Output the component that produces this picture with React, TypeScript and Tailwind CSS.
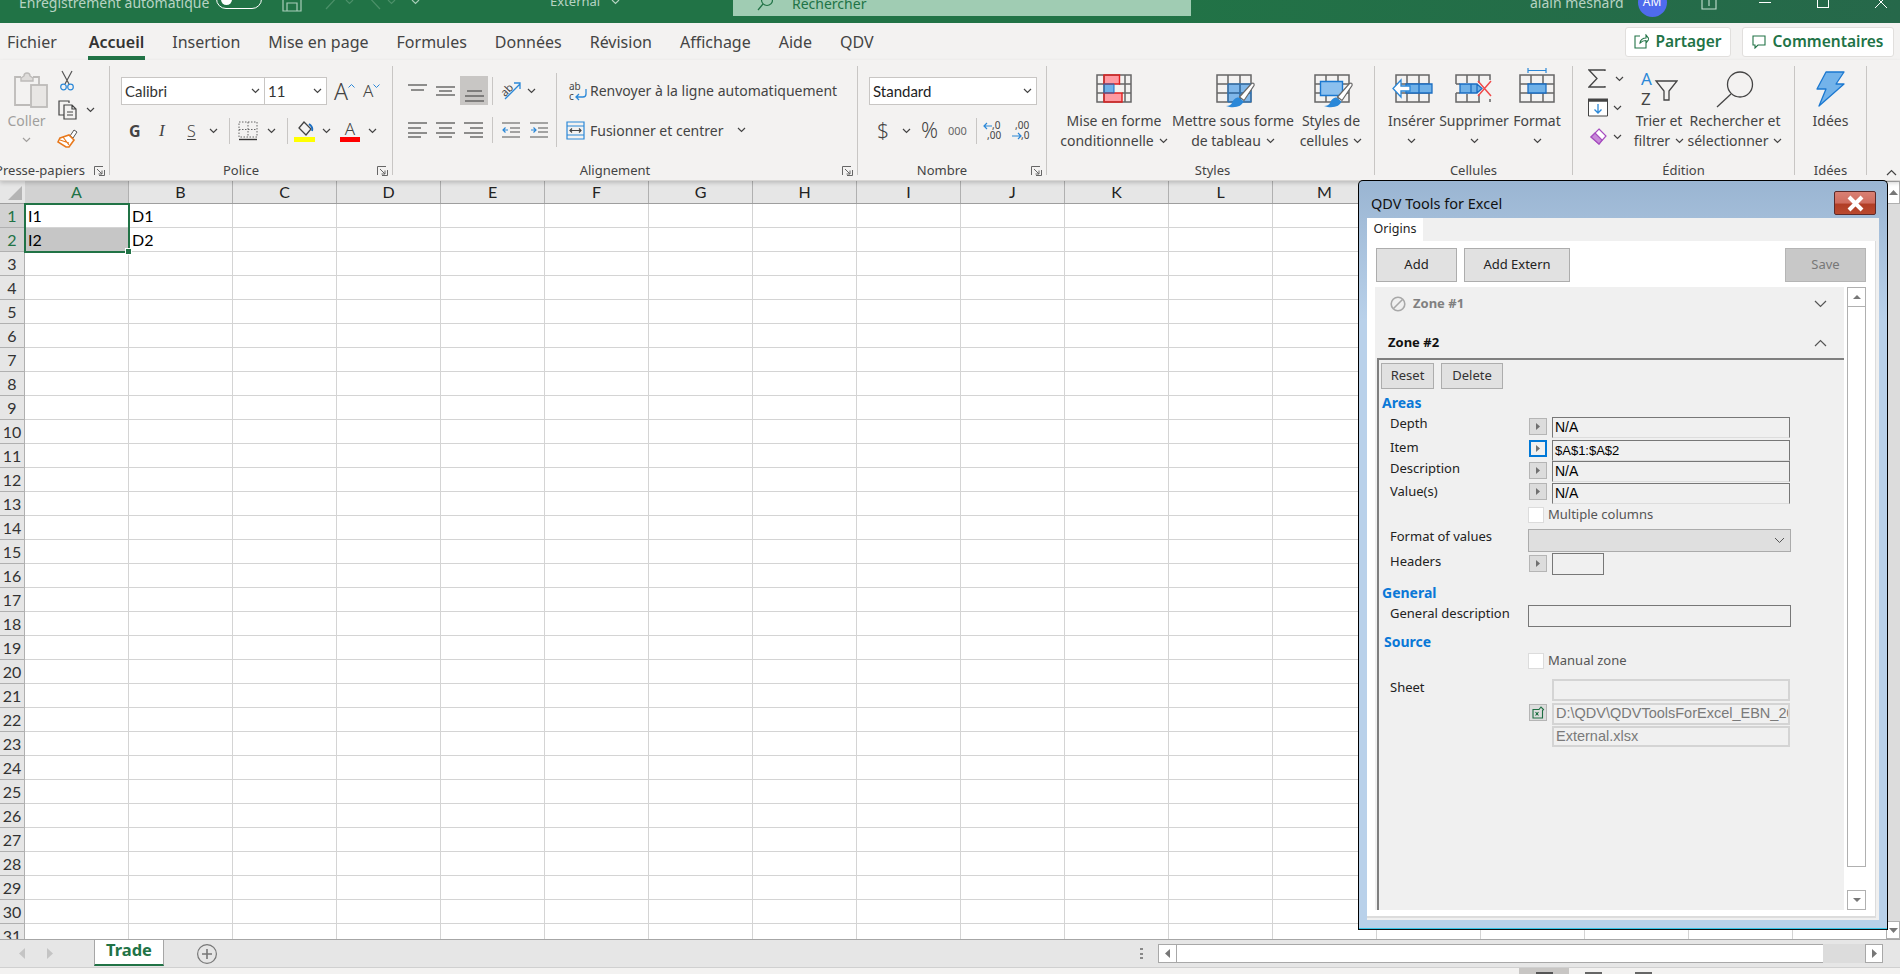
import { ReactNode } from "react";

const cols = ["A", "B", "C", "D", "E", "F", "G", "H", "I", "J", "K", "L", "M", "N", "O", "P", "Q", "R"];
const rows = Array.from({ length: 31 }, (_, i) => i + 1);
const cells: Record<string, string> = { A1: "I1", B1: "D1", A2: "I2", B2: "D2" };
const tabs = ["Fichier", "Accueil", "Insertion", "Mise en page", "Formules", "Données", "Révision", "Affichage", "Aide", "QDV"];

const Chev = ({ className = "", color = "#444" }: { className?: string; color?: string }) => (
  <svg width="9" height="6" viewBox="0 0 9 6" fill="none" stroke={color} strokeWidth="1.2" className={"shrink-0 " + className}>
    <path d="M1 1l3.5 3.5L8 1" />
  </svg>
);

const Launcher = () => (
  <svg width="11" height="10" viewBox="0 0 11 10" fill="none" stroke="#666" strokeWidth="1" className="shrink-0">
    <path d="M.5 9V.5H9M3 3l5 5M8 4.500V8H4.500M10.500 4v5.500H5" />
  </svg>
);

const Sep = ({ className }: { className: string }) => <div className={"w-px shrink-0 bg-[#c8c6c4] " + className} />;

// ribbon group with its caption row
const Group = ({ width, label, launcher, labelClass = "", children }: { width: string; label: string; launcher?: boolean; labelClass?: string; children: ReactNode }) => (
  <div className={"flex h-[109px] shrink-0 flex-col border-r border-[#c8c6c4] " + width}>
    <div className="h-[99px] shrink-0">{children}</div>
    <div className="flex h-[11px] items-center">
      <div className={"flex-1 whitespace-nowrap text-center text-[13px] leading-[13px] text-[#444] " + labelClass}>{label}</div>
      {launcher && (
        <div className="flex w-[20px] justify-center">
          <Launcher />
        </div>
      )}
    </div>
  </div>
);

const Lines = ({ lines, width = 19, height = 16 }: { lines: number[][]; width?: number; height?: number }) => (
  <svg width={width} height={height} viewBox={`0 0 ${width} ${height}`} stroke="#555" strokeWidth="1.3" className="shrink-0">
    {lines.map((l, i) => (
      <path key={i} d={`M${l[1]} ${l[0]}H${l[2]}`} />
    ))}
  </svg>
);

// large ribbon button: icon on top, one or two caption lines under it
const Large = ({ width, icon, lines, chevInline, chevBelow, iconClass = "" }: { width: string; icon: ReactNode; lines: string[]; chevInline?: boolean; chevBelow?: boolean; iconClass?: string }) => (
  <div className={"flex shrink-0 flex-col items-center " + width}>
    <div className={"flex h-[45px] w-full items-start justify-center " + iconClass}>{icon}</div>
    {lines.map((l, i) => (
      <div key={i} className="flex h-[20px] items-center gap-[5px] whitespace-nowrap text-[14px] leading-[20px] text-[#444]">
        {l}
        {chevInline && i === lines.length - 1 && <Chev />}
      </div>
    ))}
    {chevBelow && (
      <div className="flex h-[20px] items-center">
        <Chev />
      </div>
    )}
  </div>
);

const GridIcon = ({ children, w = 36, h = 29 }: { children?: ReactNode; w?: number; h?: number }) => (
  <svg width={w} height={h} viewBox={`0 0 ${w} ${h}`} fill="none" className="shrink-0 overflow-visible">
    {children}
  </svg>
);

const gridLines = "M1 1h34v27H1zM1 10h34M1 19h34M12 1v27M24 1v27";
const gridStroke = { stroke: "#666", strokeWidth: 1.5 };

const Brush = () => (
  <g>
    <path d="M35.500 9.500c2-1 3 0 2.500 2L28 26.500l-4.500-3.500z" fill="#fff" stroke="#666" strokeWidth="1.200" />
    <path d="M22.500 23.500l5 4c-1.500 4-6 6.500-14 5.500-1-.2-2-.5-3.500-1 3 0 5-1 6-3 1-3 3-5.500 6.500-5.500z" fill="#2b88d8" />
  </g>
);

const Picker = ({ className = "", active }: { className?: string; active?: boolean }) => (
  <div className={"mr-[5px] flex h-[17px] w-[18px] shrink-0 items-center justify-center " + (active ? "border-2 border-[#0078d7] " : "border border-[#b5b5b5] bg-[#dcdcdc] ") + className}>
    <svg width="4" height="7" viewBox="0 0 4 7" fill="#707070"><path d="M0 0l4 3.500L0 7z" /></svg>
  </div>
);

const Field = ({ value, className = "", size = "text-[14px]", light, gray }: { value?: string; className?: string; size?: string; light?: boolean; gray?: boolean }) => (
  <div className={"flex w-[238px] shrink-0 items-center overflow-hidden whitespace-nowrap pl-[2px] font-['Liberation_Sans',sans-serif] " + size + " " + (light ? "border-2 border-[#d4d4d4] " : "border border-[#777] border-b-[#ddd] ") + (gray ? "text-[#7a7a7a] " : "text-black ") + className}>
    {value}
  </div>
);

const FieldRow = ({ label, rowClass, labelClass = "", children }: { label?: string; rowClass: string; labelClass?: string; children?: ReactNode }) => (
  <div className={"flex items-start pl-[11px] " + rowClass}>
    <div className={"w-[139px] shrink-0 whitespace-nowrap text-[13px] leading-[16px] text-[#222] " + labelClass}>{label}</div>
    {children}
  </div>
);

const Check = ({ label }: { label: string }) => (
  <>
    <div className="-ml-px h-[16px] w-[16px] shrink-0 border border-[#dcdcdc] bg-white" />
    <div className="-mt-px ml-[4px] whitespace-nowrap text-[13px] leading-[16px] text-[#555]">{label}</div>
  </>
);

const Heading = ({ children, className }: { children: string; className: string }) => (
  <div className={"h-[18px] text-[14px] font-bold leading-[18px] text-[#0a78d7] " + className}>{children}</div>
);

const QdvDialog = () => (
  <div className="absolute left-[1358px] top-[180px] z-20 flex h-[750px] w-[530px] flex-col rounded-t-[5px] border border-black border-b-[#111] bg-[linear-gradient(#9ab5d2_0,#b9d1ea_140px)] px-[8px] pb-[9px] font-['Noto_Sans',sans-serif] shadow-[inset_0_-1px_0_#35c4e8]">
    <div className="flex h-[37px] shrink-0 items-start">
      <div className="ml-[4px] mt-[12px] whitespace-nowrap text-[14.500px] leading-[20px] text-[#111]">QDV Tools for Excel</div>
      <div className="ml-auto mr-[3px] mt-[10px] flex h-[24px] w-[42px] items-center justify-center rounded-[2px] border border-[#5d2a2a] bg-[linear-gradient(#d98074_0,#cf6c5e_50%,#b13d25_55%,#b9492f_100%)]">
        <svg width="19" height="17" viewBox="0 0 19 17" fill="none" stroke="#fff" strokeWidth="4"><path d="M3 2l13 13M16 2L3 15" /></svg>
      </div>
    </div>
    <div className="flex flex-1 flex-col bg-[#f0f0f0]">
      <div className="flex h-[23px] shrink-0">
        <div className="flex w-[56px] items-center justify-center bg-white text-[12.500px] text-[#222]">Origins</div>
      </div>
      <div className="mb-[2px] mr-[3px] flex flex-1 flex-col border-b-2 border-r border-[#dcdcdc] bg-white pl-[9px] pr-[9px] pt-[7px]">
        <div className="flex h-[34px] shrink-0 text-[13px] text-[#222]">
          <div className="flex w-[81px] items-center justify-center border border-[#adadad] bg-[#e1e1e1]">Add</div>
          <div className="ml-[7px] flex w-[106px] items-center justify-center border border-[#adadad] bg-[#e1e1e1]">Add Extern</div>
          <div className="ml-auto flex w-[81px] items-center justify-center border border-[#b5b5b5] bg-[#c8c8c8] text-[#777]">Save</div>
        </div>
        <div className="-ml-px mb-[6px] mt-[5px] flex flex-1">
          <div className="flex w-[469px] shrink-0 flex-col bg-[#f0f0f0]">
            <div className="flex h-[32px] shrink-0 items-center pl-[15px] pr-[17px] pt-[1px]">
              <svg width="16" height="16" viewBox="0 0 16 16" fill="none" stroke="#a8a8a8" strokeWidth="1.600"><circle cx="8" cy="8" r="6.800" /><path d="M3.500 12.500l9-9" /></svg>
              <div className="ml-[7px] text-[13px] font-bold text-[#808080]">Zone #1</div>
              <svg className="ml-auto" width="13" height="8" viewBox="0 0 13 8" fill="none" stroke="#555" strokeWidth="1.200"><path d="M1 1l5.500 5.500L12 1" /></svg>
            </div>
            <div className="flex h-[39px] shrink-0 items-center pl-[13px] pr-[17px] pt-[9px]">
              <div className="text-[13px] font-bold text-[#111]">Zone #2</div>
              <svg className="ml-auto" width="13" height="8" viewBox="0 0 13 8" fill="none" stroke="#555" strokeWidth="1.200"><path d="M1 7l5.500-5.500L12 7" /></svg>
            </div>
            <div className="ml-[2px] flex-1 border-l-2 border-t-2 border-[#7f7f7f]">
              <div className="mt-[3px] flex h-[26px] gap-[7px] pl-[2px] text-[13px] text-[#333]">
                <div className="flex w-[53px] items-center justify-center border border-[#adadad] bg-[#e1e1e1]">Reset</div>
                <div className="flex w-[62px] items-center justify-center border border-[#adadad] bg-[#e1e1e1]">Delete</div>
              </div>
              <Heading className="ml-[3px] mt-[5px]">Areas</Heading>
              <FieldRow label="Depth" rowClass="mt-[5px] h-[23px]" labelClass="-mt-[2px]">
                <Picker className="mt-px" />
                <Field value="N/A" className="h-[21px]" />
              </FieldRow>
              <FieldRow label="Item" rowClass="h-[21px]" labelClass="-mt-px">
                <Picker active />
                <Field value="$A$1:$A$2" size="text-[13px]" className="h-[21px]" />
              </FieldRow>
              <FieldRow label="Description" rowClass="h-[22px]" labelClass="-mt-[1px]">
                <Picker className="mt-px" />
                <Field value="N/A" className="h-[21px]" />
              </FieldRow>
              <FieldRow label="Value(s)" rowClass="h-[21px]">
                <Picker />
                <Field value="N/A" className="h-[21px]" />
              </FieldRow>
              <FieldRow rowClass="mt-[3px] h-[16px]">
                <Check label="Multiple columns" />
              </FieldRow>
              <FieldRow label="Format of values" rowClass="mt-[6px] h-[23px]" labelClass="-mt-px">
                <div className="-ml-px flex h-[23px] w-[263px] shrink-0 items-center justify-end border border-[#ababab] bg-[#dfdfdf] pr-[5px]">
                  <svg width="11" height="7" viewBox="0 0 11 7" fill="none" stroke="#555" strokeWidth="1"><path d="M1 1l4.500 4.500L10 1" /></svg>
                </div>
              </FieldRow>
              <FieldRow label="Headers" rowClass="mt-px h-[22px]">
                <Picker className="mt-[2px]" />
                <div className="h-[22px] w-[52px] shrink-0 border border-[#777]" />
              </FieldRow>
              <Heading className="ml-[3px] mt-[9px]">General</Heading>
              <FieldRow label="General description" rowClass="mt-[3px] h-[22px]">
                <div className="-ml-px h-[22px] w-[263px] shrink-0 border border-[#777]" />
              </FieldRow>
              <Heading className="ml-[5px] mt-[6px]">Source</Heading>
              <FieldRow rowClass="mt-[2px] h-[16px]">
                <Check label="Manual zone" />
              </FieldRow>
              <FieldRow label="Sheet" rowClass="mt-[10px] h-[24px]">
                <div className="w-[23px] shrink-0" />
                <Field light className="h-[22px]" />
              </FieldRow>
              <FieldRow rowClass="h-[23px]">
                <div className="mr-[5px] mt-px flex h-[17px] w-[18px] shrink-0 items-center justify-center border border-[#b5b5b5] bg-[#dcdcdc]">
                  <svg width="13" height="13" viewBox="0 0 13 13" fill="none" stroke="#1d6f42" strokeWidth="1.100"><path d="M1 3.500h6l2-2.500 2.500 2.500-1 1V12H1zM3.500 6l3 3.500M6.500 6l-3 3.500" /></svg>
                </div>
                <Field light gray value="D:\QDV\QDVToolsForExcel_EBN_2020" size="text-[14.500px]" className="h-[22px]" />
              </FieldRow>
              <FieldRow rowClass="h-[22px]">
                <div className="w-[23px] shrink-0" />
                <Field light gray value="External.xlsx" size="text-[14.500px]" className="h-[21px]" />
              </FieldRow>
            </div>
          </div>
          <div className="ml-[3px] flex w-[19px] flex-col">
            <div className="flex h-[20px] shrink-0 items-center justify-center border border-[#b0b0b0] bg-white">
              <svg width="8" height="4" viewBox="0 0 8 4" fill="#777"><path d="M4 0l4 4H0z" /></svg>
            </div>
            <div className="h-[560px] border border-t-0 border-[#b0b0b0] bg-white" />
            <div className="mt-auto flex h-[20px] shrink-0 items-center justify-center border border-[#b0b0b0] bg-white">
              <svg width="8" height="4" viewBox="0 0 8 4" fill="#777"><path d="M4 4l4-4H0z" /></svg>
            </div>
          </div>
        </div>
      </div>
    </div>
  </div>
);

const SheetGrid = () => (
  <div className="relative min-w-0 flex-1 overflow-hidden font-['Lato',sans-serif]">
    <div className="flex h-[23px] border-b border-[#9e9e9e]">
      <div className="flex w-[25px] shrink-0 items-end justify-end bg-[#e6e6e6] p-[3px]">
        <div className="h-0 w-0 border-b-[14px] border-l-[14px] border-b-[#b4b4b4] border-l-transparent" />
      </div>
      {cols.map((c) => (
        <div key={c} className={"flex w-[104px] shrink-0 items-center justify-center border-r border-[#b0b0b0] text-[16px] " + (c === "A" ? "bg-[#d2d2d2] text-[#217346]" : "bg-[#e6e6e6] text-[#222]")}>
          {c}
        </div>
      ))}
    </div>
    {rows.map((r) => (
      <div key={r} className="flex h-[24px]">
        <div className={"flex w-[25px] shrink-0 items-center justify-center border-b border-r border-[#b0b0b0] pt-px text-[16px] " + (r < 3 ? "bg-[#d2d2d2] text-[#217346]" : "bg-[#e6e6e6] text-[#333]")}>
          {r}
        </div>
        {cols.map((c) => (
          <div key={c} className={"flex w-[104px] shrink-0 items-center border-b border-r border-[#d4d4d4] pl-[3px] pt-px text-[16px] text-black " + (c + r === "A2" ? "bg-[#c6c6c6]" : "")}>
            {cells[c + r]}
          </div>
        ))}
      </div>
    ))}
    <div className="absolute left-[24px] top-[22px] h-[50px] w-[106px] border-[2px] border-[#217346]">
      <div className="absolute -bottom-[4px] -right-[4px] h-[7px] w-[7px] border border-white bg-[#217346]" />
    </div>
  </div>
);

const Ribbon = () => (
  <div className="relative z-10 flex h-[121px] shrink-0 border-b border-[#d8d6d4] bg-[#f3f2f1] pt-[6px] shadow-[0_2px_4px_rgba(0,0,0,0.18)]">
    <Group width="w-[110px]" label="Presse-papiers" launcher labelClass="-ml-[9px]">
      <div className="flex">
        <div className="flex w-[53px] shrink-0 flex-col items-center pt-[4px]">
          <svg className="ml-[8px]" width="35" height="38" viewBox="0 0 35 38" fill="none" stroke="#bdbbb9" strokeWidth="1.800">
            <path d="M17 35H2V7h6M20 7h6v8" />
            <path d="M8 8l3-2c0-4 6-4 6 0l3 2v3H8z" fill="#dedcda" strokeWidth="1.400" />
            <rect x="18" y="15" width="16" height="22" fill="#e8e6e4" />
          </svg>
          <div className="mt-[3px] text-[14px] leading-[20px] text-[#a19f9d]">Coller</div>
          <Chev color="#a19f9d" className="mt-[6px]" />
        </div>
        <div className="ml-[4px] flex flex-col items-start pt-[4px]">
          <svg className="ml-[3px]" width="14" height="21" viewBox="0 0 14 21" fill="none" strokeWidth="1.200">
            <path d="M2 1l7 13M12 1L5 14" stroke="#555" />
            <circle cx="3.500" cy="17" r="2.800" stroke="#2b88d8" />
            <circle cx="10.500" cy="17" r="2.800" stroke="#2b88d8" />
          </svg>
          <div className="mt-[9px] flex items-center gap-[5px]">
            <svg width="21" height="20" viewBox="0 0 21 20" fill="none" stroke="#444" strokeWidth="1.200">
              <path d="M12 3V1H2v14h5" />
              <path d="M7 5h8l4 4v10H7zM15 5v4h4M10 12h6M10 15h6" />
            </svg>
            <Chev className="ml-[3px]" />
          </div>
          <svg className="mt-[9px]" width="21" height="19" viewBox="0 0 21 19" fill="none">
            <path d="M13 7l4-6 3 2-4 6z" fill="#fff" stroke="#555" />
            <path d="M3 9l9-3 5 5-5 7H9l-8-5z" fill="#fff" stroke="#e8791c" strokeWidth="1.600" />
            <path d="M3 11l9 3M6 8l6 8" stroke="#e8791c" strokeWidth="1.200" />
          </svg>
        </div>
      </div>
    </Group>

    <Group width="w-[283px]" label="Police" launcher>
      <div className="pl-[11px] pt-[11px]">
        <div className="flex h-[28px] items-center">
          <div className="flex h-[28px] w-[144px] items-center justify-between border border-[#c8c6c4] bg-white pl-[3px] pr-[4px] font-['Lato',sans-serif] text-[15px] text-[#333]">
            Calibri <Chev />
          </div>
          <div className="flex h-[28px] w-[62px] items-center justify-between border border-l-0 border-[#c8c6c4] bg-white pl-[3px] pr-[4px] font-['Lato',sans-serif] text-[15px] text-[#333]">
            11 <Chev />
          </div>
          <div className="ml-[7px] flex w-[29px] items-start text-[23px] font-light leading-[24px] text-[#444]">
            A
            <svg className="mt-[5px]" width="7" height="4" viewBox="0 0 7 4" fill="none" stroke="#2b88d8"><path d="M.5 3.500l3-3 3 3" /></svg>
          </div>
          <div className="flex w-[20px] items-start text-[17px] font-light leading-[24px] text-[#444]">
            A
            <svg className="mt-[5px]" width="7" height="4" viewBox="0 0 7 4" fill="none" stroke="#2b88d8"><path d="M.5.500l3 3 3-3" /></svg>
          </div>
        </div>
        <div className="mt-[11px] flex h-[30px] items-center text-[#444]">
          <div className="ml-[8px] w-[30px] text-[16px] font-bold">G</div>
          <div className="w-[28px] font-['Liberation_Serif',serif] text-[17px] italic">I</div>
          <div className="w-[22px] text-[16px] font-light underline underline-offset-2">S</div>
          <Chev />
          <Sep className="ml-[11px] h-[26px]" />
          <svg className="ml-[8px]" width="20" height="20" viewBox="0 0 20 20" fill="none" stroke="#666" strokeDasharray="1.500 1.500">
            <path d="M1 1h18v15H1zM10 1v15M1 8.500h18" />
            <path d="M1 18.500h18" strokeDasharray="none" stroke="#333" strokeWidth="1.400" />
          </svg>
          <Chev className="ml-[9px]" />
          <Sep className="ml-[11px] h-[26px]" />
          <div className="ml-[6px] flex w-[21px] flex-col items-center">
            <svg width="18" height="16" viewBox="0 0 18 16" fill="none" strokeWidth="1.300">
              <path d="M8 1l7 7-5 6-7-7z" stroke="#444" />
              <path d="M13 3c3 2 4 4 3 7" stroke="#1b6ec2" strokeWidth="1.800" />
            </svg>
            <div className="h-[5px] w-[21px] bg-[#ffff00]" />
          </div>
          <Chev className="ml-[7px]" />
          <div className="ml-[9px] flex w-[20px] flex-col items-center text-[17px] font-light leading-[16px]">
            A
            <div className="h-[5px] w-[20px] bg-[#ff0000]" />
          </div>
          <Chev className="ml-[8px]" />
        </div>
      </div>
    </Group>

    <Group width="w-[465px]" label="Alignement" launcher>
      <div className="flex pl-[15px] pt-[10px]">
        <div className="flex w-[148px] shrink-0 flex-col">
          <div className="flex h-[29px] items-center">
            <div className="-mt-[4px]"><Lines lines={[[4, 0, 19], [9, 3, 16], [14, 0, 0]]} /></div>
            <div className="ml-[9px] -mt-[1px]"><Lines lines={[[5, 0, 19], [9, 3, 16], [13, 0, 19]]} /></div>
            <div className="ml-[5px] flex h-[29px] w-[28px] items-end justify-center bg-[#c8c6c4] pb-[3px]">
              <Lines lines={[[5, 2, 17], [10, 0, 19], [15, 0, 19]]} />
            </div>
            <Sep className="ml-[4px] h-[28px]" />
            <svg className="ml-[8px]" width="21" height="20" viewBox="0 0 21 20" fill="none">
              <text x="0" y="13" fontSize="11" fill="#444" transform="rotate(-45 6 10)">ab</text>
              <path d="M4 18L19 3M13 2h6v6" stroke="#2b88d8" strokeWidth="1.300" />
            </svg>
            <Chev className="ml-[5px]" />
          </div>
          <div className="mt-[11px] flex h-[28px] items-center">
            <Lines lines={[[1, 0, 19], [6, 0, 13], [11, 0, 19], [15, 0, 13]]} />
            <div className="ml-[9px]"><Lines lines={[[1, 0, 19], [6, 3, 16], [11, 0, 19], [15, 3, 16]]} /></div>
            <div className="ml-[9px]"><Lines lines={[[1, 0, 19], [6, 6, 19], [11, 0, 19], [15, 6, 19]]} /></div>
            <Sep className="ml-[9px] h-[26px]" />
            <svg className="ml-[9px]" width="18" height="16" viewBox="0 0 18 16" fill="none">
              <path d="M0 1h18M8 6h10M8 10h10M0 15h18" stroke="#555" strokeWidth="1.200" />
              <path d="M6 8H1M3.500 5.500L1 8l2.500 2.500" stroke="#2b88d8" strokeWidth="1.200" />
            </svg>
            <svg className="ml-[10px]" width="18" height="16" viewBox="0 0 18 16" fill="none">
              <path d="M0 1h18M8 6h10M8 10h10M0 15h18" stroke="#555" strokeWidth="1.200" />
              <path d="M1 8h5M3.500 5.500L6 8l-2.500 2.500" stroke="#2b88d8" strokeWidth="1.200" />
            </svg>
          </div>
        </div>
        <Sep className="-mt-[3px] h-[74px]" />
        <div className="ml-[11px] flex flex-col">
          <div className="flex h-[29px] items-center whitespace-nowrap text-[14px] text-[#444]">
            <svg className="mr-[2px]" width="20" height="20" viewBox="0 0 20 20" fill="none">
              <text x="1" y="9" fontSize="10" fill="#444">ab</text>
              <text x="1" y="19" fontSize="10" fill="#444">c</text>
              <path d="M18 8v5c0 2-1 3-3 3H9M11 13l-3 3 3 3" stroke="#2b88d8" strokeWidth="1.300" />
            </svg>
            Renvoyer à la ligne automatiquement
          </div>
          <div className="-ml-[2px] mt-[11px] flex h-[28px] items-center whitespace-nowrap text-[14px] text-[#444]">
            <svg className="mr-[5px]" width="19" height="19" viewBox="0 0 19 19" fill="none" stroke="#2b88d8" strokeWidth="1.200">
              <path d="M1 1h17v17H1zM1 5h17M1 14h17" />
              <path d="M4 9.500h11M6 7.500l-2 2 2 2M13 7.500l2 2-2 2" stroke="#444" />
            </svg>
            Fusionner et centrer
            <Chev className="ml-[14px]" />
          </div>
        </div>
      </div>
    </Group>

    <Group width="w-[189px]" label="Nombre" launcher>
      <div className="pl-[11px] pt-[11px]">
        <div className="flex h-[28px] w-[168px] items-center justify-between border border-[#c8c6c4] bg-white pl-[3px] pr-[4px] font-['Lato',sans-serif] text-[15px] text-[#222]">
          Standard <Chev />
        </div>
        <div className="mt-[11px] flex h-[30px] items-center text-[#444]">
          <div className="ml-[8px] w-[25px] text-[21px] font-light">$</div>
          <Chev />
          <div className="ml-[10px] w-[27px] text-[21px] font-light">%</div>
          <div className="w-[28px] text-[11px] text-[#666]">000</div>
          <Sep className="h-[26px]" />
          <svg className="ml-[6px]" width="20" height="20" viewBox="0 0 20 20" fill="none">
            <text x="9" y="8" fontSize="10" fill="#444">,0</text>
            <text x="4" y="18" fontSize="10" fill="#444">,00</text>
            <path d="M9 5H1M4 2L1 5l3 3" stroke="#2b88d8" strokeWidth="1.200" />
          </svg>
          <svg className="ml-[8px]" width="20" height="20" viewBox="0 0 20 20" fill="none">
            <text x="4" y="8" fontSize="10" fill="#444">,00</text>
            <text x="10" y="18" fontSize="10" fill="#444">,0</text>
            <path d="M1 15h9M7 12l3 3-3 3" stroke="#2b88d8" strokeWidth="1.200" />
          </svg>
        </div>
      </div>
    </Group>

    <Group width="w-[328px]" label="Styles" labelClass="pl-[4px]">
      <div className="flex pl-[12px]">
        <Large
          width="w-[110px]"
          iconClass="pt-[8px]"
          lines={["Mise en forme", "conditionnelle"]}
          chevInline
          icon={
            <GridIcon>
              <path d="M8 1h15.500v9H8zM8 19h18v9H8z" fill="#ff9aa2" />
              <path d="M8 10h10v9H8z" fill="#6fb1e8" />
              <path d="M1 1h34v27H1zM1 10h7M23 10h12M1 19h7M26 19h9M8 1v27M29 1v27" {...gridStroke} />
              <path d="M8 1h15.500v9H8zM8 19h18v9H8z" stroke="#e02020" strokeWidth="1.400" />
              <path d="M8 10h10v9H8z" stroke="#1b6ec2" strokeWidth="1" />
            </GridIcon>
          }
        />
        <Large
          width="w-[128px]"
          iconClass="pt-[8px] pl-[4px]"
          lines={["Mettre sous forme", "de tableau"]}
          chevInline
          icon={
            <GridIcon w={38}>
              <path d="M12 10h23v18H12z" fill="#7fb7ea" />
              <path d={gridLines} {...gridStroke} />
              <path d="M12 10h23v18H12zM24 10v18M12 19h23" stroke="#1b78d0" strokeWidth="1" />
              <Brush />
            </GridIcon>
          }
        />
        <Large
          width="w-[68px]"
          iconClass="pt-[8px] pl-[4px]"
          lines={["Styles de", "cellules"]}
          chevInline
          icon={
            <GridIcon w={38}>
              <path d={gridLines} {...gridStroke} />
              <path d="M6.500 7.500h22v14h-22z" fill="#8cc0ee" stroke="#1b78d0" strokeWidth="1.400" />
              <Brush />
            </GridIcon>
          }
        />
      </div>
    </Group>

    <Group width="w-[198px]" label="Cellules">
      <div className="flex pl-[14px]">
        <Large
          width="w-[45px]"
          iconClass="pt-[8px]"
          lines={["Insérer"]}
          chevBelow
          icon={
            <GridIcon w={40}>
              <path d="M4 1h33v27H4zM4 10h33M4 19h33M15 1v27M27 1v27" {...gridStroke} />
              <path d="M14 10h26v9H14zM27 10v9" fill="#6fb1e8" stroke="#1b6ec2" strokeWidth="1.300" />
              <path d="M18 12H9V6l-8 8.500L9 23v-6h9z" fill="#fff" stroke="#2b88d8" strokeWidth="1.300" />
            </GridIcon>
          }
        />
        <Large
          width="w-[80px]"
          iconClass="pt-[8px]"
          lines={["Supprimer"]}
          chevBelow
          icon={
            <GridIcon w={38}>
              <path d="M1 10V1h34v5M1 19v9h24M35 28v-3M1 10h4M1 19h4M12 1v8M12 20v8M24 1v8M24 20v8" {...gridStroke} />
              <path d="M5 10h17v9H5zM16 10v9M22 10l5 4.500-5 4.500" fill="#6fb1e8" stroke="#1b6ec2" strokeWidth="1.300" />
              <path d="M23 7l13 15M36 7L23 22" stroke="#f04a4a" strokeWidth="1.500" />
            </GridIcon>
          }
        />
        <Large
          width="w-[46px]"
          iconClass="pt-[2px]"
          lines={["Format"]}
          chevBelow
          icon={
            <div className="flex flex-col items-center">
              <svg width="20" height="6" viewBox="0 0 20 6" fill="none" stroke="#2b88d8" strokeWidth="1.200"><path d="M1 0v5M19 0v5M1 2.500h18" /></svg>
              <GridIcon>
                <path d={gridLines} {...gridStroke} />
                <path d="M9 10h18v9H9z" fill="#6fb1e8" stroke="#1b6ec2" strokeWidth="1.300" />
              </GridIcon>
            </div>
          }
        />
      </div>
    </Group>

    <Group width="w-[222px]" label="Édition">
      <div className="flex pl-[15px]">
        <div className="flex w-[47px] shrink-0 flex-col pt-[3px]">
          <div className="flex h-[19px] items-center">
            <svg width="18" height="19" viewBox="0 0 18 19" fill="none" stroke="#444" strokeWidth="1.300"><path d="M17 2V1H1l8 8.500L1 18h16v-1" /></svg>
            <Chev className="ml-[9px]" />
          </div>
          <div className="mt-[10px] flex h-[19px] items-center">
            <svg width="20" height="19" viewBox="0 0 20 19" fill="none">
              <path d="M.5 3h19v15H.500z" stroke="#444" fill="#fff" />
              <path d="M0 2h20" stroke="#444" strokeWidth="3" />
              <path d="M10 6v9M6.500 11.500L10 15l3.500-3.500" stroke="#2b88d8" strokeWidth="1.300" />
            </svg>
            <Chev className="ml-[5px]" />
          </div>
          <div className="mt-[10px] flex h-[20px] items-center">
            <svg width="20" height="20" viewBox="0 0 20 20" fill="none" strokeWidth="1.200">
              <path d="M11 2l7 7-7 8-8-7z" fill="#fff" stroke="#a64dbf" />
              <path d="M7 6l7 7-3 4-8-7z" fill="#c88ad9" stroke="#a64dbf" />
            </svg>
            <Chev className="ml-[5px]" />
          </div>
        </div>
        <Large
          width="w-[48px]"
          iconClass="pt-[5px]"
          lines={["Trier et", "filtrer"]}
          chevInline
          icon={
            <svg width="37" height="35" viewBox="0 0 37 35" fill="none">
              <text x="0" y="14" fontSize="17" fill="#2b88d8" fontFamily="Noto Sans">A</text>
              <text x="0" y="34" fontSize="17" fill="#444" fontFamily="Noto Sans">Z</text>
              <path d="M15 10h21l-8 10v9h-5v-9z" stroke="#444" strokeWidth="1.300" />
            </svg>
          }
        />
        <Large
          width="w-[96px] ml-[4px]"
          iconClass="pt-[5px]"
          lines={["Rechercher et", "sélectionner"]}
          chevInline
          icon={
            <svg width="38" height="37" viewBox="0 0 38 37" fill="none" stroke="#444" strokeWidth="1.300">
              <circle cx="24" cy="13.500" r="12.500" />
              <path d="M15 23L1 36" />
            </svg>
          }
        />
      </div>
    </Group>

    <Group width="w-[72px]" label="Idées">
      <Large
        width="w-full"
        iconClass="pt-[5px]"
        lines={["Idées"]}
        icon={
          <svg width="29" height="36" viewBox="0 0 29 36" fill="#73b3ea" stroke="#1b78d0" strokeWidth="1.300" strokeLinejoin="round">
            <path d="M10 1h18l-8 12h8L3 35l7-17H1z" />
          </svg>
        }
      />
    </Group>
    <div className="ml-auto mr-[3px] mt-[103px]">
      <svg width="11" height="7" viewBox="0 0 11 7" fill="none" stroke="#444" strokeWidth="1.200"><path d="M1 6l4.500-4.500L10 6" /></svg>
    </div>
  </div>
);

export default function App() {
  return (
    <div className="relative flex h-[974px] w-[1900px] flex-col overflow-hidden bg-white font-['Noto_Sans',sans-serif]">
      {/* title bar, its upper part is cut off in the capture */}
      <div className="h-[23px] shrink-0 overflow-hidden bg-[linear-gradient(90deg,#217346_60%,#26684a_100%)]">
        <div className="-mt-[10px] flex h-[24px] items-center text-[14px] text-[#b7d3c3]">
          <div className="ml-[19px] w-[197px] whitespace-nowrap">Enregistrement automatique</div>
          <div className="-mt-[6px] flex h-[20px] w-[46px] items-center rounded-full border border-white pl-[4px]">
            <div className="h-[11px] w-[11px] rounded-full bg-white" />
          </div>
          <svg className="ml-[20px] -mt-[2px]" width="20" height="22" viewBox="0 0 20 22" fill="none" stroke="#a9cdb9" strokeWidth="1.200"><path d="M1 1h15l3 3v17H1zM5 1v6h9V1M5 21v-8h10v8" /></svg>
          <svg className="ml-[22px]" width="16" height="16" viewBox="0 0 16 16" fill="none" stroke="#4c9069" strokeWidth="1.200"><path d="M15 1L2 15" /></svg>
          <Chev color="#4c9069" className="ml-[5px]" />
          <svg className="ml-[12px]" width="16" height="16" viewBox="0 0 16 16" fill="none" stroke="#4c9069" strokeWidth="1.200"><path d="M1 1l13 14" /></svg>
          <Chev color="#4c9069" className="ml-[5px]" />
          <Chev color="#a9cdb9" className="ml-[15px]" />
          <div className="ml-[130px] w-[55px] whitespace-nowrap text-[13px]">External</div>
          <Chev color="#b7d3c3" className="ml-[6px]" />
          <div className="ml-[113px] flex h-[26px] w-[458px] shrink-0 items-center self-start bg-[#a0ccb3] pl-[24px] text-[#217346]">
            <svg width="16" height="18" viewBox="0 0 16 18" fill="none" stroke="#217346" strokeWidth="1.200"><circle cx="10" cy="6" r="5.500" /><path d="M6 10l-5 6" /></svg>
            <span className="ml-[19px]">Rechercher</span>
          </div>
          <div className="ml-[339px] whitespace-nowrap text-[#b7d3c3]">alain meshard</div>
          <div className="ml-[14px] flex h-[29px] w-[29px] shrink-0 items-center justify-center rounded-full bg-[#4f6bed] text-[12px] text-white">AM</div>
          <svg className="ml-[34px]" width="16" height="16" viewBox="0 0 16 16" fill="none" stroke="#c3ded0" strokeWidth="1.100"><path d="M1 4v11h14V4M8 12V1M5 4l3-3 3 3" /></svg>
          <div className="ml-[42px] h-px w-[12px] bg-white" />
          <div className="ml-[46px] h-[12px] w-[12px] border border-white" />
          <svg className="ml-[46px]" width="12" height="12" viewBox="0 0 12 12" stroke="#fff"><path d="M0 0l12 12M12 0L0 12" /></svg>
        </div>
      </div>

      {/* tabs */}
      <div className="flex h-[37px] shrink-0 items-center bg-[#f3f2f1] pl-[7px] text-[16px] text-[#444]">
        <div className="flex gap-[28px]">
          {tabs.map((t) =>
            t === "Accueil" ? (
              <div key={t} className="relative font-semibold text-[#333]">
                {t}
                <div className="absolute -bottom-[6px] -left-px -right-px h-[4px] bg-[#217346]" />
              </div>
            ) : (
              <div key={t} className={t === "Fichier" ? "mr-[4px]" : ""}>{t}</div>
            ),
          )}
        </div>
        <div className="ml-auto flex h-[30px] w-[106px] items-center justify-center gap-[6px] rounded-[3px] border border-[#e1dfdd] bg-white text-[15.500px] font-semibold text-[#217346]">
          <svg width="15" height="15" viewBox="0 0 15 15" fill="none" stroke="#217346" strokeWidth="1.100"><path d="M6 2H1v12h11V9M6 9c0-3 3-5 6-5V1l3 4-3 4V6.500C9.500 6.500 7.500 7.500 6 9z" /></svg>
          Partager
        </div>
        <div className="ml-[11px] mr-[6px] flex h-[30px] w-[152px] items-center justify-center gap-[6px] rounded-[3px] border border-[#e1dfdd] bg-white text-[15.500px] font-semibold text-[#217346]">
          <svg width="14" height="14" viewBox="0 0 14 14" fill="none" stroke="#217346" strokeWidth="1.100"><path d="M1 1h12v9H6l-3 3v-3H1z" /></svg>
          Commentaires
        </div>
      </div>

      <Ribbon />

      {/* sheet */}
      <div className="flex min-h-0 flex-1">
        <SheetGrid />
        <div className="flex w-[14px] shrink-0 flex-col bg-[#dcdcdc]">
          <div className="flex h-[23px] items-center justify-center border border-[#b0b0b0] bg-white">
            <svg width="9" height="5" viewBox="0 0 9 5" fill="#777"><path d="M4.500 0L9 5H0z" /></svg>
          </div>
          <div className="flex-1" />
          <div className="flex h-[18px] items-center justify-center border border-[#b0b0b0] bg-white">
            <svg width="9" height="5" viewBox="0 0 9 5" fill="#777"><path d="M4.500 5L9 0H0z" /></svg>
          </div>
        </div>
      </div>

      {/* sheet tabs and horizontal scrollbar */}
      <div className="flex h-[29px] shrink-0 border-b border-t border-b-[#d0d0d0] border-t-[#a6a6a6] bg-[#e6e6e6]">
        <div className="flex w-[94px] shrink-0 items-center pl-[19px]">
          <svg width="6" height="11" viewBox="0 0 6 11" fill="#c4c4c4"><path d="M6 0v11L0 5.500z" /></svg>
          <svg className="ml-[22px]" width="6" height="11" viewBox="0 0 6 11" fill="#c4c4c4"><path d="M0 0v11l6-5.500z" /></svg>
        </div>
        <div className="flex h-[26px] w-[70px] shrink-0 items-center justify-center border-x border-b-[2px] border-x-[#a6a6a6] border-b-[#217346] bg-white pb-[3px] text-[16.500px] font-bold text-[#217346]">Trade</div>
        <svg className="ml-[33px] mt-[4px]" width="20" height="20" viewBox="0 0 20 20" fill="none" stroke="#777" strokeWidth="1.200">
          <circle cx="10" cy="10" r="9.400" />
          <path d="M10 5v10M5 10h10" strokeWidth="1.600" />
        </svg>
        <div className="ml-auto mt-[8px] flex h-[11px] w-[3px] flex-col justify-between">
          <div className="h-[2px] bg-[#888]" />
          <div className="h-[2px] bg-[#888]" />
          <div className="h-[2px] bg-[#888]" />
        </div>
        <div className="ml-[15px] mr-[17px] mt-[4px] flex h-[19px] w-[725px] bg-[#dcdcdc]">
          <div className="flex w-[19px] items-center justify-center border border-[#a8a8a8] bg-white">
            <svg width="5" height="9" viewBox="0 0 5 9" fill="#777"><path d="M5 0v9L0 4.500z" /></svg>
          </div>
          <div className="w-[646px] border-y border-[#a8a8a8] bg-white" />
          <div className="ml-auto flex w-[18px] items-center justify-center border border-[#a8a8a8] bg-white">
            <svg width="5" height="9" viewBox="0 0 5 9" fill="#777"><path d="M0 0v9l5-4.500z" /></svg>
          </div>
        </div>
      </div>

      {/* status bar, mostly cut off */}
      <div className="flex h-[6px] shrink-0 overflow-hidden bg-[#f3f2f1] pl-[1519px]">
        <div className="flex h-[6px] w-[50px] justify-center bg-[#c8c6c4] pt-[4px]">
          <div className="h-[2px] w-[17px] bg-[#555]" />
        </div>
        <div className="ml-[16px] mt-[4px] h-[2px] w-[17px] bg-[#666]" />
        <div className="ml-[33px] mt-[4px] h-[2px] w-[17px] bg-[#666]" />
      </div>

      <QdvDialog />
    </div>
  );
}
